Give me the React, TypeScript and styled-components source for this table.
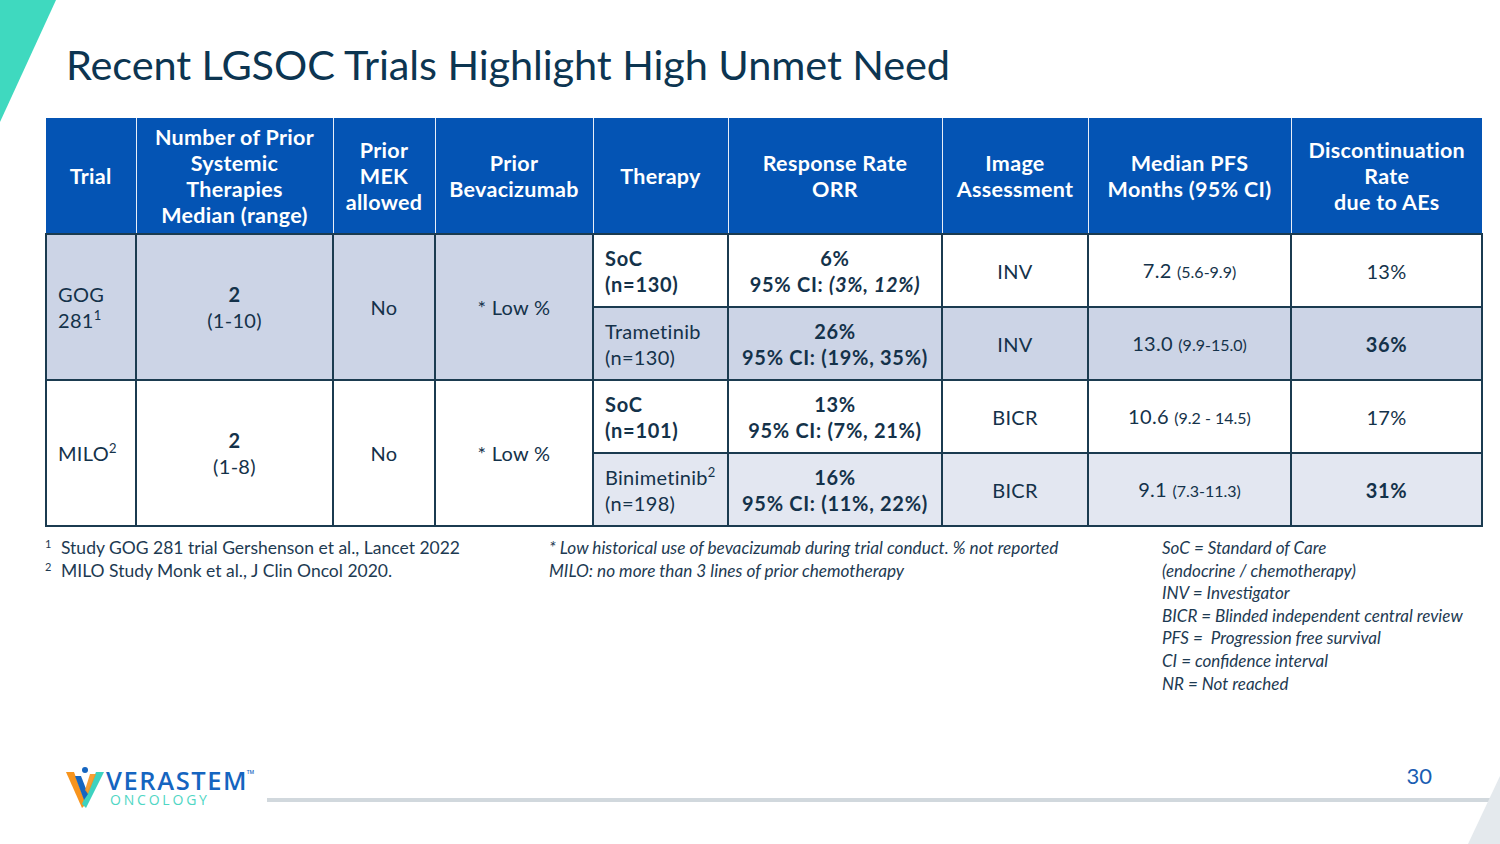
import React from 'react'
import styled, { createGlobalStyle } from 'styled-components'

const GlobalStyle = createGlobalStyle`
  html, body {
    margin: 0;
    padding: 0;
    background: #ffffff;
  }
  body {
    font-family: Lato, "Open Sans", sans-serif;
    color: #14324a;
  }
`

const Slide = styled.main`
  position: relative;
  width: 1500px;
  height: 844px;
  overflow: hidden;
  background: #ffffff;
  display: flex;
  flex-direction: column;
`

const Corner = styled.svg`
  position: absolute;
  pointer-events: none;
`

const Title = styled.h1`
  margin: 39px 0 0 66px;
  font-family: Lato, sans-serif;
  font-weight: 400;
  font-size: 41.5px;
  line-height: 50px;
  color: #0c3551;
  letter-spacing: -0.1px;
`

const Table = styled.table`
  margin: 29px 0 0 45px;
  width: 1436px;
  border-collapse: collapse;
  table-layout: fixed;
`

const HeadCell = styled.th`
  background: #0454b4;
  color: #ffffff;
  font-weight: 700;
  font-size: 21.5px;
  line-height: 26px;
  letter-spacing: 0.3px;
  text-align: center;
  padding: 0 2px;
  border-left: 1px solid #e8eef8;
  border-right: 1px solid #e8eef8;
  border-bottom: 2px solid #1b3b50;
  &:first-child { border-left: 0; }
  &:last-child { border-right: 0; }
`

const HeadRow = styled.tr`
  height: 116px;
`

const BodyRow = styled.tr`
  height: 73px;
`

type Tone = 'white' | 'band' | 'pale'

const toneColor: Record<Tone, string> = {
  white: '#ffffff',
  band: '#ccd4e6',
  pale: '#e3e7f1',
}

const Cell = styled.td<{ $tone: Tone; $left?: boolean; $bold?: boolean }>`
  background: ${(p) => toneColor[p.$tone]};
  border: 2px solid #1b3b50;
  font-size: 20px;
  line-height: 26px;
  font-weight: ${(p) => (p.$bold ? 700 : 400)};
  text-align: ${(p) => (p.$left ? 'left' : 'center')};
  padding: ${(p) => (p.$left ? '0 6px 0 11px' : '0 4px')};
  vertical-align: middle;
  color: #14324a;
  letter-spacing: ${(p) => (p.$bold ? 0.7 : 0.3)}px;
`

const Small = styled.span`
  font-size: 16px;
  letter-spacing: 0;
`

const Sup = styled.sup`
  font-size: 13px;
  line-height: 0;
  vertical-align: 8px;
`

const Strong = styled.b`
  font-weight: 700;
`

const Notes = styled.section`
  display: grid;
  grid-template-columns: 504px 613px 1fr;
  margin: 9px 0 0 45px;
  font-size: 17.5px;
  line-height: 23px;
  color: #1d3a52;
`

const RefList = styled.div`
  display: flex;
  flex-direction: column;
`

const RefLine = styled.div`
  display: flex;
  gap: 8px;
`

const RefMark = styled.span`
  font-size: 11px;
  line-height: 16px;
  width: 8px;
`

const Italic = styled.div<{ $top?: number; $size?: number; $lh?: number }>`
  font-style: italic;
  font-size: ${(p) => p.$size ?? 17.5}px;
  line-height: ${(p) => p.$lh ?? 23}px;
  padding-top: ${(p) => p.$top ?? 0}px;
  white-space: pre-wrap;
`

const Footer = styled.footer`
  margin-top: auto;
  display: grid;
  grid-template-columns: 201px 1fr;
  align-items: end;
  padding: 0 0 42px 66px;
`

const Logo = styled.div`
  display: flex;
  align-items: center;
  gap: 2px;
  height: 42px;
  margin-bottom: -6px;
`

const LogoWords = styled.div`
  display: flex;
  flex-direction: column;
`

const Brand = styled.span`
  font-family: "Open Sans", sans-serif;
  font-weight: 600;
  font-size: 25.5px;
  line-height: 26px;
  color: #1565c0;
  letter-spacing: 1.6px;
  position: relative;
  white-space: nowrap;
`

const Tm = styled.span`
  position: absolute;
  top: 2px;
  right: -6px;
  font-size: 5px;
  line-height: 6px;
  letter-spacing: 0;
`

const Onc = styled.span`
  font-family: "Open Sans", sans-serif;
  font-size: 14px;
  line-height: 14px;
  letter-spacing: 2.8px;
  color: #4fd6c4;
  padding-left: 4px;
`

const Rail = styled.div`
  display: flex;
  flex-direction: column;
  align-items: flex-end;
  gap: 10px;
`

const PageNo = styled.span`
  font-size: 22px;
  line-height: 24px;
  color: #1a5db2;
  padding-right: 68px;
`

const Line = styled.div`
  width: 100%;
  height: 4px;
  background: #d1d8dd;
`

const VMark = () => (
  <svg width="38" height="42" viewBox="0 0 38 42">
    <polygon points="0,6 8,6 20,38 16,42" fill="#f7941d" />
    <polygon points="30,6 38,6 20,42 16,38" fill="#3dd2c0" />
    <polygon points="9,10 15,10 22,28 18,34" fill="#1565c0" />
    <polygon points="24,8 30,8 22,28 19,24" fill="#f7941d" opacity="0.9" />
    <circle cx="19" cy="4" r="3" fill="#1565c0" />
  </svg>
)

const App = () => (
  <Slide>
    <GlobalStyle />
    <Corner style={{ left: 0, top: 0 }} width="56" height="122" viewBox="0 0 56 122">
      <polygon points="0,0 56,0 0,122" fill="#3fd9bf" />
    </Corner>
    <Corner style={{ right: 0, bottom: 0 }} width="34" height="68" viewBox="0 0 34 68">
      <polygon points="34,0 34,68 2,68" fill="#e4e9ed" />
    </Corner>

    <Title>Recent LGSOC Trials Highlight High Unmet Need</Title>

    <Table>
      <colgroup>
        <col style={{ width: 90 }} />
        <col style={{ width: 197 }} />
        <col style={{ width: 102 }} />
        <col style={{ width: 158 }} />
        <col style={{ width: 135 }} />
        <col style={{ width: 214 }} />
        <col style={{ width: 146 }} />
        <col style={{ width: 203 }} />
        <col style={{ width: 191 }} />
      </colgroup>
      <thead>
        <HeadRow>
          <HeadCell>Trial</HeadCell>
          <HeadCell>Number of Prior<br />Systemic<br />Therapies<br />Median (range)</HeadCell>
          <HeadCell>Prior<br />MEK<br />allowed</HeadCell>
          <HeadCell>Prior<br />Bevacizumab</HeadCell>
          <HeadCell>Therapy</HeadCell>
          <HeadCell>Response Rate<br />ORR</HeadCell>
          <HeadCell>Image<br />Assessment</HeadCell>
          <HeadCell>Median PFS<br />Months (95% CI)</HeadCell>
          <HeadCell>Discontinuation<br />Rate<br />due to AEs</HeadCell>
        </HeadRow>
      </thead>
      <tbody>
        <BodyRow>
          <Cell $tone="band" $left rowSpan={2}>GOG<br />281<Sup>1</Sup></Cell>
          <Cell $tone="band" rowSpan={2}><Strong>2</Strong><br />(1-10)</Cell>
          <Cell $tone="band" rowSpan={2}>No</Cell>
          <Cell $tone="band" rowSpan={2}>* Low %</Cell>
          <Cell $tone="white" $left $bold>SoC<br />(n=130)</Cell>
          <Cell $tone="white" $bold>6%<br />95% CI: <i>(3%, 12%)</i></Cell>
          <Cell $tone="white">INV</Cell>
          <Cell $tone="white">7.2 <Small>(5.6-9.9)</Small></Cell>
          <Cell $tone="white">13%</Cell>
        </BodyRow>
        <BodyRow>
          <Cell $tone="band" $left>Trametinib<br />(n=130)</Cell>
          <Cell $tone="band" $bold>26%<br />95% CI: (19%, 35%)</Cell>
          <Cell $tone="band">INV</Cell>
          <Cell $tone="band">13.0 <Small>(9.9-15.0)</Small></Cell>
          <Cell $tone="band" $bold>36%</Cell>
        </BodyRow>
        <BodyRow>
          <Cell $tone="white" $left rowSpan={2}>MILO<Sup>2</Sup></Cell>
          <Cell $tone="white" rowSpan={2}><Strong>2</Strong><br />(1-8)</Cell>
          <Cell $tone="white" rowSpan={2}>No</Cell>
          <Cell $tone="white" rowSpan={2}>* Low %</Cell>
          <Cell $tone="white" $left $bold>SoC<br />(n=101)</Cell>
          <Cell $tone="white" $bold>13%<br />95% CI: (7%, 21%)</Cell>
          <Cell $tone="white">BICR</Cell>
          <Cell $tone="white">10.6 <Small>(9.2 - 14.5)</Small></Cell>
          <Cell $tone="white">17%</Cell>
        </BodyRow>
        <BodyRow>
          <Cell $tone="pale" $left>Binimetinib<Sup>2</Sup><br />(n=198)</Cell>
          <Cell $tone="pale" $bold>16%<br />95% CI: (11%, 22%)</Cell>
          <Cell $tone="pale">BICR</Cell>
          <Cell $tone="pale">9.1 <Small>(7.3-11.3)</Small></Cell>
          <Cell $tone="pale" $bold>31%</Cell>
        </BodyRow>
      </tbody>
    </Table>

    <Notes>
      <RefList>
        <RefLine><RefMark>1</RefMark><span>Study GOG 281 trial Gershenson et al., Lancet 2022</span></RefLine>
        <RefLine><RefMark>2</RefMark><span>MILO Study Monk et al., J Clin Oncol 2020.</span></RefLine>
      </RefList>
      <Italic $size={17.2}>
        {'* Low historical use of bevacizumab during trial conduct. % not reported\nMILO: no more than 3 lines of prior chemotherapy'}
      </Italic>
      <Italic $top={1} $size={17} $lh={22.6}>
        {'SoC = Standard of Care\n(endocrine / chemotherapy)\nINV = Investigator\nBICR = Blinded independent central review\nPFS =  Progression free survival\nCI = confidence interval\nNR = Not reached'}
      </Italic>
    </Notes>

    <Footer>
      <Logo>
        <VMark />
        <LogoWords>
          <Brand>VERASTEM<Tm>TM</Tm></Brand>
          <Onc>ONCOLOGY</Onc>
        </LogoWords>
      </Logo>
      <Rail>
        <PageNo>30</PageNo>
        <Line />
      </Rail>
    </Footer>
  </Slide>
)

export default App
